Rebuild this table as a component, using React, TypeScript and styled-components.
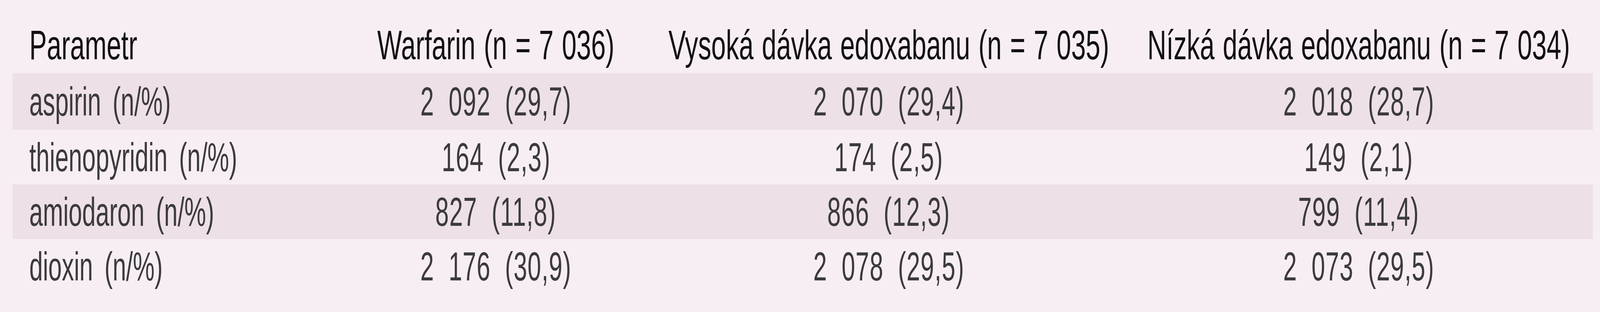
import { ReactElement } from "react";

import styled, { createGlobalStyle } from "styled-components";

// The page is laid out in fractions of the window width; the glyphs are
// narrowed so that the text keeps the reference's condensed proportions.
const GlobalStyle = createGlobalStyle`
  html,
  body {
    margin: 0;
    padding: 0;
    background-color: #f7eef3;
  }
`;

const COLUMNS =
  "minmax(0, 1243fr) minmax(0, 1196fr) minmax(0, 1796fr) minmax(0, 1784fr)";

const Wrapper = styled.div`
  padding: 45px 0.443vw 0 0.788vw;
  min-height: 755px;
  background-color: #f7eef3;
  font-family: "Liberation Sans", Arial, sans-serif;
`;

const Table = styled.div`
  display: flex;
  flex-direction: column;
`;

const HeadRow = styled.div`
  display: grid;
  grid-template-columns: ${COLUMNS};
  height: 141px;
  line-height: 141px;
  margin-bottom: 2px;
  font-size: 105px;
  color: #111013;
`;

const Body = styled.div`
  display: flex;
  flex-direction: column;
`;

const Row = styled.div<{ striped?: boolean }>`
  display: grid;
  grid-template-columns: ${COLUMNS};
  height: 140px;
  line-height: 140px;
  font-size: 104px;
  color: #3b3a3f;
  background-color: ${({ striped }) => (striped ? "#ede0e6" : "transparent")};

  &:first-child {
    height: 145px;
    line-height: 145px;
  }
`;

const Cell = styled.div<{ first?: boolean }>`
  display: flex;
  justify-content: ${({ first }) => (first ? "flex-start" : "center")};
  min-width: 0;
  white-space: nowrap;
  padding-left: ${({ first }) => (first ? "1.05vw" : "0")};
`;

const HeadText = styled.span<{ first?: boolean }>`
  flex-shrink: 0;
  word-spacing: 4px;
  transform: scaleX(0.64);
  transform-origin: ${({ first }) => (first ? "left center" : "center")};
`;

const LabelText = styled.span`
  flex-shrink: 0;
  word-spacing: 20px;
  transform: scaleX(0.6);
  transform-origin: left center;
`;

const ValueText = styled.span`
  flex-shrink: 0;
  letter-spacing: 2px;
  word-spacing: 30px;
  transform: scaleX(0.6);
  transform-origin: center;
`;

interface DataRow {
  label: string;
  values: string[];
}

const headers = [
  "Warfarin (n = 7 036)",
  "Vysoká dávka edoxabanu (n = 7 035)",
  "Nízká dávka edoxabanu (n = 7 034)",
];

const rows: DataRow[] = [
  { label: "aspirin (n/%)", values: ["2 092 (29,7)", "2 070 (29,4)", "2 018 (28,7)"] },
  { label: "thienopyridin (n/%)", values: ["164 (2,3)", "174 (2,5)", "149 (2,1)"] },
  { label: "amiodaron (n/%)", values: ["827 (11,8)", "866 (12,3)", "799 (11,4)"] },
  { label: "dioxin (n/%)", values: ["2 176 (30,9)", "2 078 (29,5)", "2 073 (29,5)"] },
];

const App = (): ReactElement => {
  return (
    <>
      <GlobalStyle />
      <Wrapper>
        <Table>
          <HeadRow>
            <Cell first>
              <HeadText first>Parametr</HeadText>
            </Cell>
            {headers.map((h) => (
              <Cell key={h}>
                <HeadText>{h}</HeadText>
              </Cell>
            ))}
          </HeadRow>
          <Body>
            {rows.map((row, i) => (
              <Row key={row.label} striped={i % 2 === 0}>
                <Cell first>
                  <LabelText>{row.label}</LabelText>
                </Cell>
                {row.values.map((v, j) => (
                  <Cell key={j}>
                    <ValueText>{v}</ValueText>
                  </Cell>
                ))}
              </Row>
            ))}
          </Body>
        </Table>
      </Wrapper>
    </>
  );
};

export default App;
